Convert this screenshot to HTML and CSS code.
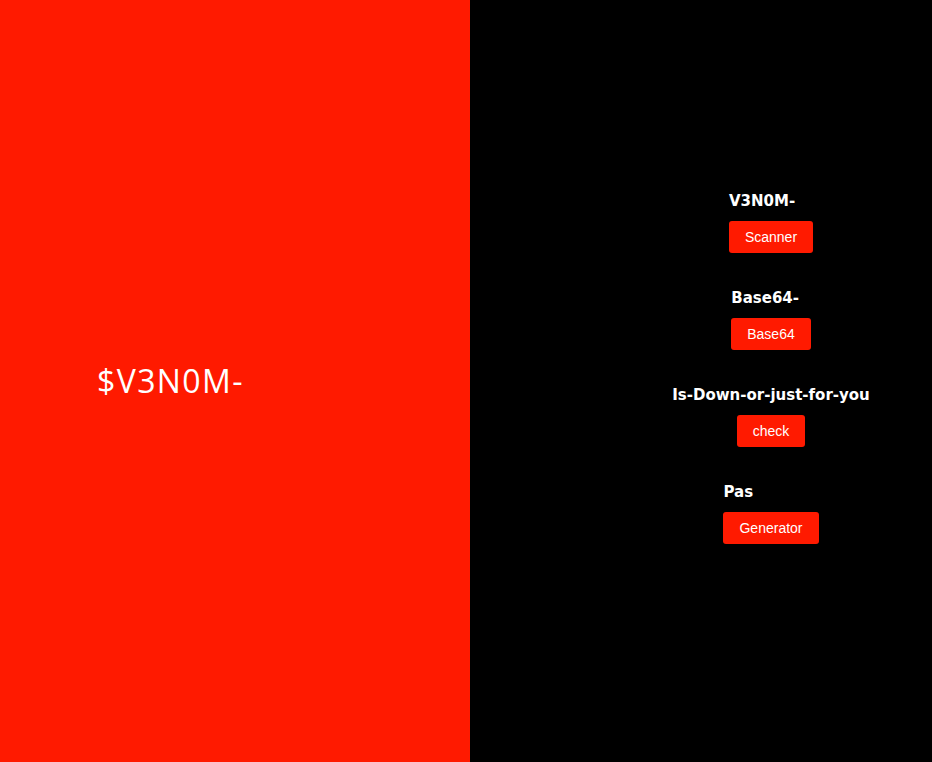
FILE: index.html
```html
<!DOCTYPE html>
<html lang="en">
<head>
<meta charset="utf-8">
<title>$V3N0M-</title>
<link rel="stylesheet" href="styles.css">
</head>
<body>
<main class="page">
  <section class="hero">
    <h1 class="hero-title">$V3N0M-</h1>
  </section>
  <section class="tools">
    <div class="tool">
      <h2 class="tool-name">V3N0M-</h2>
      <button class="tool-btn">Scanner</button>
    </div>
    <div class="tool">
      <h2 class="tool-name">Base64-</h2>
      <button class="tool-btn">Base64</button>
    </div>
    <div class="tool">
      <h2 class="tool-name">Is-Down-or-just-for-you</h2>
      <button class="tool-btn">check</button>
    </div>
    <div class="tool">
      <h2 class="tool-name">Pas</h2>
      <button class="tool-btn">Generator</button>
    </div>
  </section>
</main>
</body>
</html>
```
FILE: styles.css
```css
* { box-sizing: border-box; }
html, body { margin: 0; padding: 0; height: 100%; }
body { background: #000; font-family: "Open Sans", "DejaVu Sans", sans-serif; }

.page {
  display: grid;
  grid-template-columns: 470px 1fr;
  height: 762px;
}

.hero {
  background: #ff1a00;
  display: flex;
  align-items: center;
  padding-left: 97px;
}

.hero-title {
  margin: 0;
  color: #fff;
  font-family: "Open Sans", sans-serif;
  font-weight: 400;
  font-size: 32px;
  letter-spacing: 1.4px;
  line-height: 1;
}

.tools {
  background: #000;
  display: flex;
  flex-direction: column;
  align-items: center;
  justify-content: center;
  gap: 35px;
  padding-left: 140px;
  padding-bottom: 28px;
}

.tool {
  display: flex;
  flex-direction: column;
  align-items: flex-start;
  gap: 10px;
}

.tool-name {
  margin: 0;
  color: #fff;
  font-family: "DejaVu Sans", sans-serif;
  font-weight: 700;
  font-size: 15px;
  line-height: 20px;
}

.tool-btn {
  align-self: center;
  background: #ff1a00;
  color: #fff;
  border: none;
  border-radius: 3px;
  font-family: "Liberation Sans", Arial, sans-serif;
  font-size: 14px;
  height: 32px;
  padding: 0 16px;
  cursor: pointer;
}
```
